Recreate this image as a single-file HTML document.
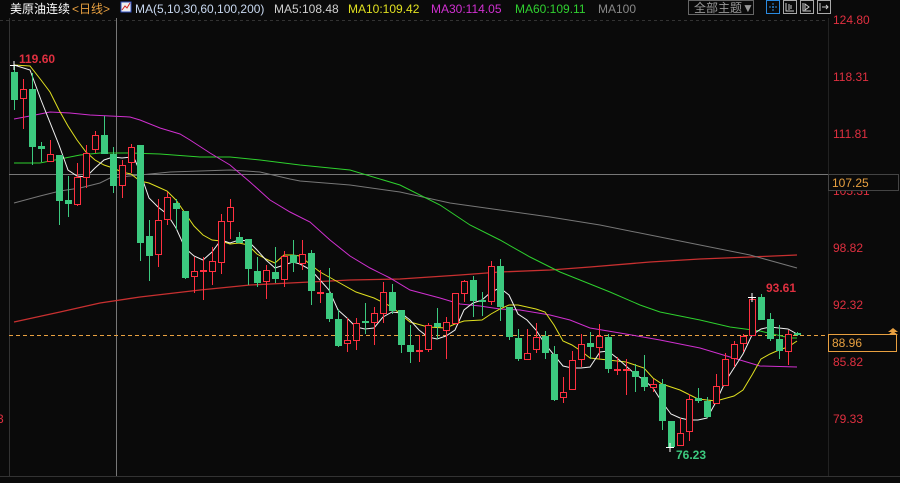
<!DOCTYPE html>
<html><head><meta charset="utf-8"><style>
html,body{margin:0;padding:0;background:#0a0a0a;width:900px;height:483px;overflow:hidden}
svg{display:block}
text{font-family:"Liberation Sans","Noto Sans CJK SC",sans-serif}
</style></head><body>
<svg width="900" height="483" viewBox="0 0 900 483" xmlns="http://www.w3.org/2000/svg">
<rect width="900" height="483" fill="#0a0a0a"/>
<!-- frame -->
<line x1="9.5" y1="18" x2="9.5" y2="476" stroke="#333" />
<line x1="0" y1="476.5" x2="900" y2="476.5" stroke="#333"/>
<line x1="828.5" y1="18" x2="828.5" y2="476" stroke="#222"/>
<line x1="0" y1="20.5" x2="828" y2="20.5" stroke="#333" stroke-dasharray="3 3"/>
<!-- crosshair -->
<line x1="116.5" y1="18" x2="116.5" y2="476" stroke="#777"/>
<line x1="9" y1="174.5" x2="828" y2="174.5" stroke="#777"/>
<!-- orange dashed -->
<line x1="9" y1="335.5" x2="890" y2="335.5" stroke="#e8a040" stroke-dasharray="4 3"/>
<!-- MAs -->
<g fill="none" stroke-width="1">
<polyline stroke="#c83030" stroke-width="1.3" points="14,322 60,312 100,303 140,297 200,290 250,285 290,283 350,280 400,279 460,275 500,272 550,270 590,267 650,262 700,259 750,257 797,255"/>
<polyline stroke="#777" points="14,203 40,196 60,191 80,188 100,183 110,178 130,176 140,175 170,172 200,171 230,170 260,172 290,179 300,181 350,185 400,192 450,203 500,210 550,217 600,225 650,235 700,245 750,255 797,268"/>
<polyline stroke="#2ed02e" points="14,163 40,163 60,159 80,155 100,153 130,153 160,154 200,157 230,157 260,160 300,165 350,170 400,185 440,205 470,225 500,240 530,257 560,272 580,280 610,292 640,305 660,312 700,320 730,327 760,331 790,338 797,338"/>
<polyline stroke="#d030d0" points="14,119 30,116 50,112 70,113 90,115 110,116 130,117 140,120 160,128 180,134 190,140 210,153 230,165 250,182 270,200 290,212 310,222 330,240 350,256 370,268 390,278 410,290 440,298 460,304 480,306 500,309 520,310 550,315 570,320 590,328 620,333 660,340 700,348 720,354 740,360 760,366 797,367"/>
<polyline stroke="#e0e020" points="14,65 30,66 41,80 50,92 59,110 68,126 77,140 86,152 95,160 104,165 113,168 122,172 131,174 140,181 149,183 158,187 167,191 176,200 185,213 194,226 203,235 212,240 221,241 230,244 239,243 248,245 257,254 266,259 275,263 284,255 293,255 300,256 311,265 320,272 338,282 356,292 374,298 392,307 410,322 428,327 446,328 455,324 464,321 482,320 491,314 500,309 509,305 518,305 536,309 545,312 554,325 563,341 572,345 581,351 590,358 608,360 626,362 644,368 653,378 662,384 680,390 698,399 716,401 734,396 743,390 752,375 761,359 770,354 779,350 788,347 797,341"/>
<polyline stroke="#f0f0f0" points="14,65 30,70 41,100 59,145 68,170 77,176 86,177 95,168 104,160 113,157 122,158 131,157 135,160 140,172 149,198 158,207 167,214 176,228 185,248 194,256 203,260 212,252 221,240 230,243 239,240 248,241 257,250 266,260 275,268 284,265 293,262 300,264 311,270 320,280 329,290 338,310 347,318 356,327 365,329 374,328 383,317 392,312 401,313 410,320 419,330 428,337 437,339 446,336 455,330 464,310 473,303 482,300 491,292 500,288 509,295 518,314 527,320 536,330 545,344 554,355 563,366 572,368 581,368 590,367 600,352 608,351 617,358 626,366 635,374 644,380 653,388 662,402 671,414 680,418 689,420 698,420 707,418 716,402 725,382 734,368 743,354 752,335 761,329 770,327 779,328 788,329 797,334"/>
</g>
<!-- green candles -->
<path stroke="#3cc97f" fill="none" d="M14.5 65V110M32.5 73V165M41.5 142V162M59.5 155V225M68.5 176V217M104.5 116V154M113.5 147V193M140.5 145V261M149.5 220V281M176.5 199V230M185.5 211V279M239.5 232V243M248.5 239V285M257.5 257V287M275.5 247V283M293.5 240V272M311.5 250V305M329.5 268V322M338.5 309V347M365.5 303V334M392.5 284V314M401.5 310V353M410.5 325V363M437.5 308V339M473.5 276V317M482.5 292V316M500.5 259V321M509.5 307V340M518.5 329V361M545.5 331V359M554.5 346V401M590.5 332V359M608.5 334V373M635.5 364V392M644.5 355V391M662.5 379V430M671.5 421V448M698.5 388V403M707.5 397V418M761.5 294V320M770.5 313V341M779.5 325V359M797.5 332V336"/>
<path fill="#3cc97f" d="M11 72h7V100h-7zM29 89h7V147h-7zM38 146h7V149h-7zM56 155h7V201h-7zM65 200h7V204h-7zM101 135h7V154h-7zM110 154h7V186h-7zM137 145h7V243h-7zM146 236h7V256h-7zM173 203h7V209h-7zM182 211h7V278h-7zM236 237h7V243h-7zM245 239h7V269h-7zM254 271h7V283h-7zM272 272h7V279h-7zM290 255h7V263h-7zM308 253h7V291h-7zM326 293h7V319h-7zM335 319h7V346h-7zM362 321h7V323h-7zM389 292h7V311h-7zM398 310h7V345h-7zM407 345h7V352h-7zM434 323h7V327h-7zM470 280h7V301h-7zM479 300h7V302h-7zM497 266h7V307h-7zM506 307h7V337h-7zM515 338h7V359h-7zM542 336h7V353h-7zM551 354h7V400h-7zM587 343h7V347h-7zM605 337h7V369h-7zM632 371h7V377h-7zM641 377h7V387h-7zM659 384h7V421h-7zM668 421h7V447h-7zM695 398h7V401h-7zM704 401h7V417h-7zM758 297h7V320h-7zM767 319h7V339h-7zM776 339h7V351h-7zM794 333h7V335h-7z"/>
<!-- red candles -->
<path stroke="#ff3040" fill="none" d="M23.5 79V129M50.5 140V161M77.5 163V206M86.5 145V188M95.5 131V153M122.5 160V198M131.5 144V173M158.5 199V267M167.5 192V225M194.5 257V293M203.5 257V300M212.5 247V285M221.5 214V274M230.5 199V239M266.5 265V299M284.5 251V287M302.5 240V270M320.5 270V303M347.5 318V352M356.5 318V350M374.5 307V345M383.5 282V323M419.5 335V362M428.5 323V352M446.5 317V359M455.5 293V323M464.5 280V302M491.5 261V305M527.5 329V359M536.5 323V353M563.5 377V403M572.5 351V389M581.5 334V367M599.5 324V359M617.5 357V375M626.5 359V395M653.5 379V392M680.5 418V445M689.5 394V441M716.5 374V403M725.5 353V385M734.5 341V367M743.5 334V352M752.5 297V335M788.5 330V365"/>
<path stroke="#ff3040" fill="#0a0a0a" d="M20.5 89.5h6V98.5h-6zM47.5 154.5h6V161.5h-6zM74.5 177.5h6V204.5h-6zM83.5 153.5h6V177.5h-6zM92.5 135.5h6V149.5h-6zM119.5 165.5h6V185.5h-6zM128.5 147.5h6V162.5h-6zM155.5 220.5h6V254.5h-6zM164.5 197.5h6V219.5h-6zM191.5 271.5h6V276.5h-6zM200.5 270.5h6V271.5h-6zM209.5 261.5h6V271.5h-6zM218.5 221.5h6V262.5h-6zM227.5 207.5h6V221.5h-6zM263.5 270.5h6V281.5h-6zM281.5 256.5h6V279.5h-6zM299.5 254.5h6V263.5h-6zM317.5 292.5h6V293.5h-6zM344.5 340.5h6V343.5h-6zM353.5 323.5h6V340.5h-6zM371.5 313.5h6V322.5h-6zM380.5 292.5h6V313.5h-6zM416.5 350.5h6V351.5h-6zM425.5 325.5h6V349.5h-6zM443.5 322.5h6V330.5h-6zM452.5 293.5h6V323.5h-6zM461.5 281.5h6V293.5h-6zM488.5 266.5h6V301.5h-6zM524.5 353.5h6V359.5h-6zM533.5 337.5h6V349.5h-6zM560.5 392.5h6V397.5h-6zM569.5 360.5h6V389.5h-6zM578.5 344.5h6V359.5h-6zM596.5 336.5h6V347.5h-6zM614.5 369.5h6V370.5h-6zM623.5 369.5h6V370.5h-6zM650.5 384.5h6V387.5h-6zM677.5 433.5h6V445.5h-6zM686.5 399.5h6V431.5h-6zM713.5 386.5h6V403.5h-6zM722.5 359.5h6V385.5h-6zM731.5 344.5h6V358.5h-6zM740.5 336.5h6V343.5h-6zM749.5 299.5h6V335.5h-6zM785.5 334.5h6V351.5h-6z"/>
<!-- marks -->
<path stroke="#fff" d="M10 65.5h8M14 61v9M748 297.5h8M752 293v9M666 447.5h8M670 443v9"/>
<g font-size="12" font-weight="bold">
<text x="19" y="63" fill="#e03040">119.60</text>
<text x="766" y="292" fill="#e03040">93.61</text>
<text x="676" y="459" fill="#3cc97f">76.23</text>
</g>
<!-- axis -->
<g font-size="12" fill="#e03040">
<text x="833" y="24">124.80</text>
<text x="833" y="81">118.31</text>
<text x="833" y="138">111.81</text>
<text x="833" y="195">105.31</text>
<text x="833" y="252">98.82</text>
<text x="833" y="309">92.32</text>
<text x="833" y="366">85.82</text>
<text x="833" y="423">79.33</text>
<text x="-3" y="423">3</text>
</g>
<rect x="828.5" y="174.5" width="70" height="16" fill="#0a0a0a" stroke="#444"/>
<text x="832" y="187" font-size="12" fill="#e8a040">107.25</text>
<rect x="828.5" y="334.5" width="68" height="17" fill="#0a0a0a" stroke="#e8a040"/>
<text x="832" y="347" font-size="12" fill="#e8a040">88.96</text>
<path d="M888 332l5-4 5 4zM888 335l5-4 5 4z" fill="#e8a040"/>
<!-- header -->
<g font-size="12">
<text x="10" y="13" fill="#fff">美原油连续</text>
<text x="72" y="13" fill="#e8a040">&lt;日线&gt;</text>
<rect x="121" y="2" width="10" height="10" fill="#eee" stroke="#3050c0"/>
<path d="M122 10l3-4 2 2 3-5" stroke="#d02020" fill="none"/>
<text x="135" y="13" fill="#c8d8f0">MA(5,10,30,60,100,200)</text>
<text x="274" y="13" fill="#d0d0d0">MA5:108.48</text>
<text x="348" y="13" fill="#e0e020">MA10:109.42</text>
<text x="431" y="13" fill="#d030d0">MA30:114.05</text>
<text x="515" y="13" fill="#30d030">MA60:109.11</text>
<text x="598" y="13" fill="#888">MA100</text>
</g>
<rect x="688.5" y="0.5" width="65" height="14" fill="none" stroke="#666"/>
<text x="694" y="12" font-size="12" fill="#999">全部主题▼</text>
<g fill="none">
<rect x="766.5" y="0.5" width="13" height="13" stroke="#2a8ae0"/>
<path d="M773 3v8M769 7h8" stroke="#2a8ae0" stroke-dasharray="2 1"/>
<rect x="783.5" y="0.5" width="13" height="13" stroke="#aaa"/>
<path d="M786 3v8h8M789 4v6M791 5v4" stroke="#ccc"/>
<rect x="800.5" y="0.5" width="13" height="13" stroke="#aaa"/>
<path d="M803 3v8h8M805 4l4 3-4 3z" stroke="#ccc"/>
<rect x="817.5" y="0.5" width="13" height="13" stroke="#aaa"/>
<path d="M820 3v8M822 7h6M826 5l2 2-2 2" stroke="#ccc"/>
</g>
</svg>
</body></html>
